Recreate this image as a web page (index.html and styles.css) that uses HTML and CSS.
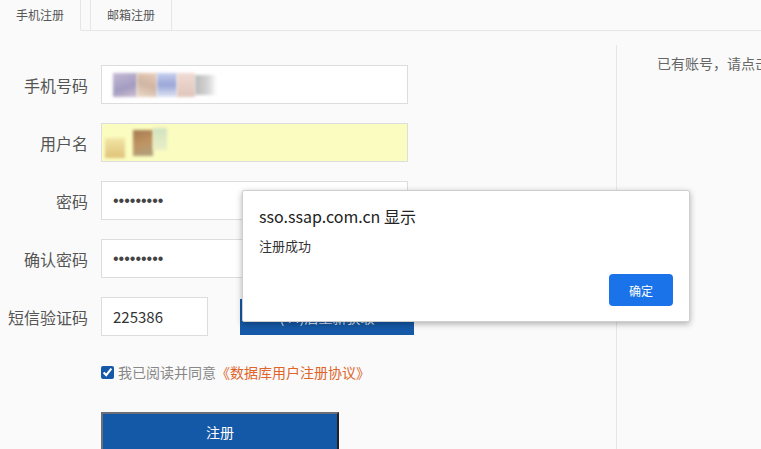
FILE: index.html
```html
<!DOCTYPE html>
<html>
<head>
  <title>用户注册</title>
  <link rel="stylesheet" href="styles.css">
</head>
<body>

<div class="tabs">
  <div class="tab active">手机注册</div>
  <div class="tab-gap"></div>
  <div class="tab">邮箱注册</div>
</div>

<div class="main">
  <div class="form">
    <div class="row">
      <label>手机号码</label>
      <div class="field">
        <span class="smudge s1"></span><span class="smudge s2"></span><span class="smudge s3"></span><span class="smudge s4"></span><span class="smudge s5"></span>
      </div>
    </div>
    <div class="row">
      <label>用户名</label>
      <div class="field autofill">
        <span class="smudge y1"></span><span class="smudge y2"></span><span class="smudge y3"></span>
      </div>
    </div>
    <div class="row">
      <label>密码</label>
      <input class="field" type="password" value="123456789">
    </div>
    <div class="row">
      <label>确认密码</label>
      <input class="field" type="password" value="123456789">
    </div>
    <div class="row">
      <label>短信验证码</label>
      <input class="field short" type="text" value="225386">
      <button class="btn-code">(44)后重新获取</button>
    </div>
    <div class="agree">
      <input type="checkbox" checked>
      <span>我已阅读并同意</span><a href="#">《数据库用户注册协议》</a>
    </div>
    <button class="btn-submit">注册</button>
  </div>

  <div class="side">已有账号，请点击登录</div>
</div>

<div class="dialog">
  <div class="dialog-title">sso.ssap.com.cn 显示</div>
  <div class="dialog-msg">注册成功</div>
  <div class="dialog-foot"><button>确定</button></div>
</div>

</body>
</html>
```

FILE: styles.css
```css
body { margin: 0; background: #fafafa; font-family: "Noto Sans CJK SC", "Noto Sans", sans-serif; color: #555; overflow: hidden; height: 449px; }

.tabs { display: flex; height: 30px; border-bottom: 1px solid #e6e6e6; }
.tab { width: 80px; font-size: 12px; line-height: 30px; text-align: center; color: #555; border: 1px solid #e6e6e6; border-top: none; background: #fafafa; margin-bottom: -1px; }
.tab.active { border-left: none; border-bottom-color: #fafafa; }
.tab-gap { width: 9px; }

.main { display: flex; padding-top: 14px; }
.form { flex-shrink: 0; width: 617px; border-right: 1px solid #e6e6e6; padding-top: 20px; height: 420px; box-sizing: border-box; }
.side { padding: 8px 0 0 40px; font-size: 14px; color: #666; white-space: nowrap; }

.row { display: flex; align-items: center; margin-bottom: 19px; }
.row label { width: 88px; text-align: right; font-size: 16px; color: #555; margin-right: 13px; }
.field { box-sizing: border-box; width: 307px; height: 39px; border: 1px solid #ddd; background: #fff; padding: 0 11px; font-family: inherit; font-size: 15px; color: #333; display: flex; align-items: center; outline: none; }
.field.autofill { background: #fafcc0; padding-left: 3px; }
.field.short { width: 107px; }
input[type=password].field { font-family: "Liberation Sans", Arial, sans-serif; font-size: 16px; color: #444; }

.smudge { display: inline-block; height: 24px; filter: blur(1.5px); opacity: 0.8; }
.s1 { width: 24px; background: linear-gradient(160deg, #b7a8cc, #8c84b0 60%, #c6b2c9); }
.s2 { width: 20px; background: linear-gradient(200deg, #e4c3a8, #c4a38c 50%, #e9d0bd); }
.s3 { width: 20px; background: linear-gradient(180deg, #b8c3ea, #8290cd 50%, #d7def2); }
.s4 { width: 18px; background: linear-gradient(180deg, #ecd2c9, #d8b7aa); }
.s5 { width: 22px; height: 20px; background: linear-gradient(90deg, #a9a9a9, #ccc 60%, rgba(255,255,255,0)); }
.y1 { width: 20px; height: 20px; margin-top: 10px; background: linear-gradient(180deg, #f1dfa0, #d9b567); }
.y2 { width: 20px; height: 26px; margin-left: 8px; background: linear-gradient(160deg, #8e5a34, #b27a4c 50%, #9a8c72); }
.y3 { width: 14px; height: 22px; margin-bottom: 8px; background: linear-gradient(180deg, #c7dcc0, #e7ecc8); }

.btn-code { margin-left: 32px; width: 174px; height: 36px; background: #1559a8; border: none; color: #dfe8f5; font-family: inherit; font-size: 14px; }

.agree { display: flex; align-items: center; margin: 26px 0 0 100px; font-size: 14px; color: #888; }
.agree input { margin: 0 4px 0 1px; width: 13px; height: 13px; accent-color: #1559a8; }
.agree a { color: #e0642a; text-decoration: none; }

.btn-submit { display: block; margin: 30px 0 0 101px; width: 238px; height: 40px; background: #1459a7; color: #fff; font-family: inherit; font-size: 14px; border: 2px solid; border-color: #6b6f76 #222 #222 #6b6f76; }

.dialog { position: absolute; left: 242px; top: 190px; width: 448px; height: 132px; box-sizing: border-box; background: #fff; border: 1px solid #cfcfcf; border-radius: 2px; box-shadow: 0 2px 6px rgba(0,0,0,0.3); padding: 0 16px; }
.dialog-title { font-size: 16px; color: #222; margin-top: 13px; line-height: 24px; }
.dialog-msg { font-size: 13px; color: #333; margin-top: 8px; }
.dialog-foot { display: flex; justify-content: flex-end; margin-top: 19px; }
.dialog-foot button { width: 64px; height: 32px; background: #1a73e8; color: #fff; border: none; border-radius: 4px; font-family: inherit; font-size: 12px; }
```
